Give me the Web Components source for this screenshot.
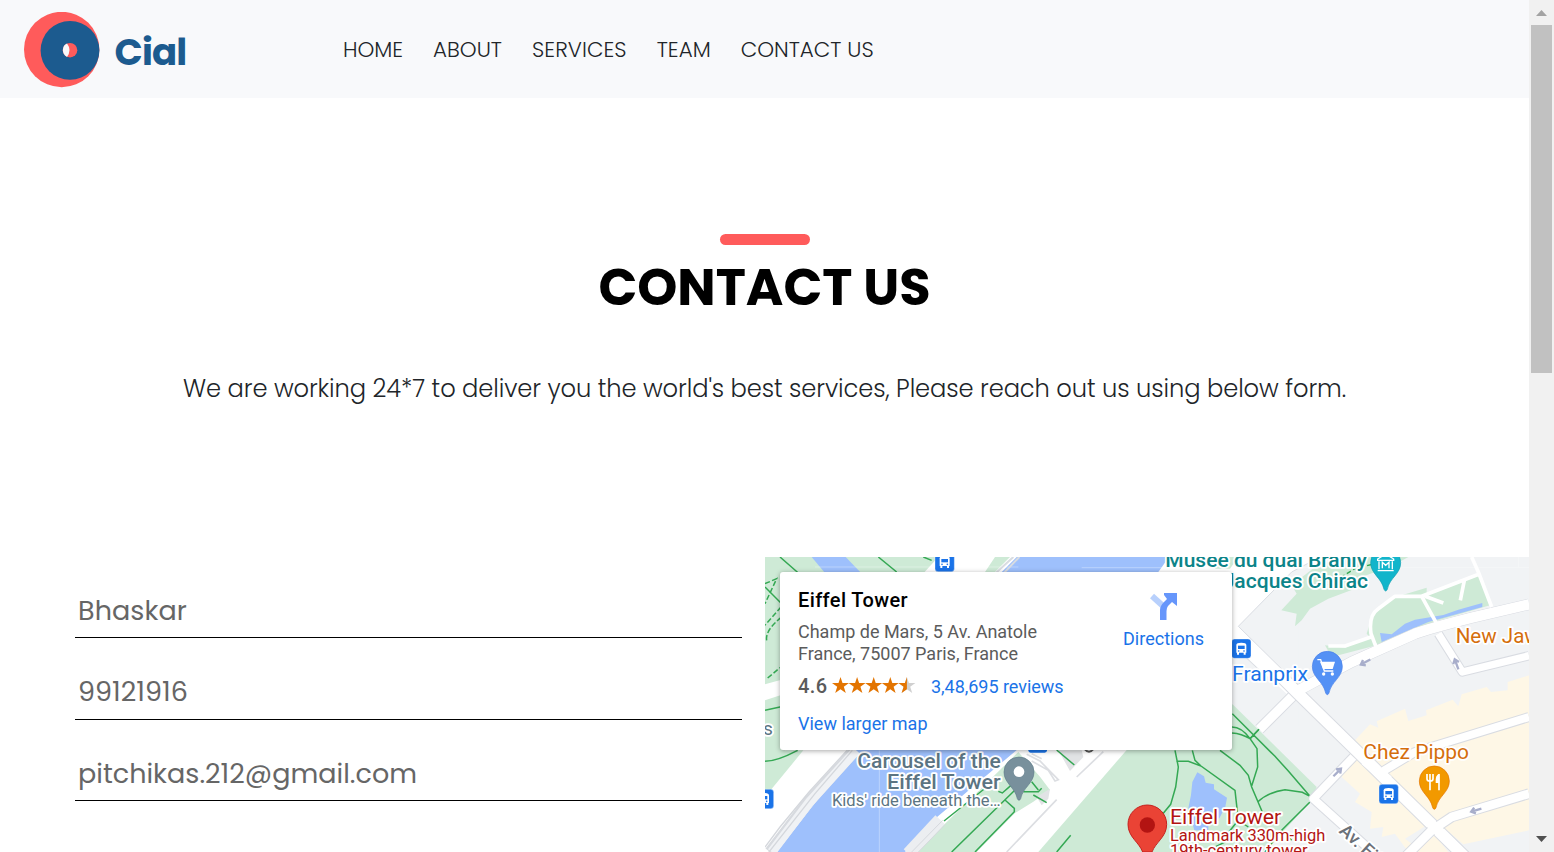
<!DOCTYPE html>
<html lang="en">
<head>
<meta charset="utf-8">
<title>Cial - Contact us</title>
<style>
html,body{margin:0;height:852px;overflow:hidden;background:#fff}
body{font-family:Poppins,Inter,sans-serif}
</style>
</head>
<body>
<cial-page></cial-page>
<script>
// <fit-text width="n"> tracks its text so that the line is exactly n pixels wide.
class FitText extends HTMLElement {
  connectedCallback() {
    this.attachShadow({mode:'open'}).innerHTML = `<style>:host{display:block;white-space:nowrap;flex:none}span{display:inline-block}</style><span><slot></slot></span>`;
    const target = +this.getAttribute('width'), s = this.shadowRoot.querySelector('span');
    if (!target) return;
    this.style.width = target + 'px';
    const w = s.getBoundingClientRect().width;
    s.style.letterSpacing = ((target - w) / this.textContent.length) + 'px';
  }
}
class CialLogo extends HTMLElement {
  constructor() {
    super();
    this.attachShadow({mode:'open'}).innerHTML = `<style>
    :host{display:flex;align-items:center;width:162px;height:76px;gap:14.5px;flex:none;color:#1c5b8f;font-weight:700;font-size:37px;line-height:72px}
    svg{display:block;flex:none}fit-text{margin-top:4px}</style>
    <svg width="76" height="76" viewBox="0 0 76 76"><circle cx="37.7" cy="37.5" r="37.7" fill="#ff5b5b"/><circle cx="46" cy="38.4" r="29.4" fill="#1c5b8f"/><circle cx="46" cy="38.2" r="7.3" fill="#ff5b5b"/><path d="M43 31.5C38 33 37 42 43 45Q48 38 43 31.5Z" fill="#f8f9fb"/></svg>
    <fit-text width="72">Cial</fit-text>`;
  }
}
class CialHeader extends HTMLElement {
  constructor() {
    super();
    this.attachShadow({mode:'open'}).innerHTML = `<style>
    :host{display:flex;align-items:center;height:98px;background:#f8f9fb;padding:2px 0 0 24px;box-sizing:border-box}
    nav{display:flex;gap:30px;margin-left:157px;font-size:21.4px;font-weight:300;line-height:30px;color:#212529}</style>
    <cial-logo></cial-logo>
    <nav><fit-text width="60">HOME</fit-text><fit-text width="69">ABOUT</fit-text><fit-text width="94.7">SERVICES</fit-text><fit-text width="54">TEAM</fit-text><fit-text width="133">CONTACT US</fit-text></nav>`;
  }
}
class ContactHero extends HTMLElement {
  constructor() {
    super();
    this.attachShadow({mode:'open'}).innerHTML = `<style>
    :host{display:flex;flex-direction:column;align-items:center;height:459px;padding-top:136px;box-sizing:border-box}
    i{width:90px;height:11px;border-radius:6px;background:#ff5b5b}
    h1{margin:12px 0 0;font-size:51px;line-height:60px;font-weight:700;color:#000}
    p{margin:55px 0 0;font-size:24.2px;line-height:34px;font-weight:300;color:#212529}</style>
    <i></i><h1><fit-text>CONTACT US</fit-text></h1>
    <p><fit-text width="1163">We are working 24*7 to deliver you the world's best services, Please reach out us using below form.</fit-text></p>`;
  }
}
class FormField extends HTMLElement {
  constructor() {
    super();
    this.attachShadow({mode:'open'}).innerHTML = `<style>
    :host{display:flex;align-items:flex-end;height:81.5px;box-sizing:border-box;border-bottom:1px solid #000;padding:0 3px 8.4px;font-size:27px;line-height:36px;color:#666}</style><slot></slot>`;
  }
}
class ContactForm extends HTMLElement {
  constructor() {
    super();
    this.attachShadow({mode:'open'}).innerHTML = `<style>
    :host{display:block;width:667px;margin:-0.4px 23px 0 75px;flex:none}</style>
    <form-field><fit-text width="109">Bhaskar</fit-text></form-field>
    <form-field><fit-text width="110">99121916</fit-text></form-field>
    <form-field><fit-text width="339">pitchikas.212@gmail.com</fit-text></form-field>`;
  }
}
const starPath = 'M8.5 0L10.5 5.9H17L11.8 9.7 13.8 16 8.5 12.2 3.2 16 5.2 9.7 0 5.9H6.5Z';
class PlaceCard extends HTMLElement {
  constructor() {
    super();
    const stars = [0,1,2,3].map(i => `<path transform="translate(${i*16.6})" d="${starPath}"/>`).join('');
    this.attachShadow({mode:'open'}).innerHTML = `<style>
    :host{display:flex;justify-content:space-between;width:452px;height:178px;box-sizing:border-box;padding:17px 28px 0 18px;background:#fff;border-radius:3px;box-shadow:0 1px 5px rgba(0,0,0,.35);font-family:Roboto,sans-serif;font-size:18px;line-height:22px;color:#5b5b5b}
    b{display:block;font-size:20px;font-weight:500;color:#000;margin-bottom:10px}
    .rate{display:flex;align-items:center;margin:11px 0 15px}
    .rate b{margin:-2px 0 0;color:#5b5b5b}
    .rate svg{margin:-4px 15px 0 4.5px}
    .blue{color:#1a73e8}
    aside{display:flex;flex-direction:column;align-items:center}
    aside svg{margin:4px 0 8px}</style>
    <div><b><fit-text width="110">Eiffel Tower</fit-text></b>
    <fit-text width="239">Champ de Mars, 5 Av. Anatole</fit-text><fit-text width="220">France, 75007 Paris, France</fit-text>
    <div class="rate"><b><fit-text width="29.5">4.6</fit-text></b>
    <svg width="84" height="16" viewBox="0 0 84 16" fill="#e37400">${stars}<g transform="translate(66.4)"><path d="${starPath}" fill="#d0d0d0"/><path d="M8.5 0V12.2L3.2 16 5.2 9.7 0 5.9H6.5Z"/></g></svg>
    <fit-text class="blue" width="132.5">3,48,695 reviews</fit-text></div>
    <fit-text class="blue" width="129.5">View larger map</fit-text></div>
    <aside><svg width="28" height="27" viewBox="0 0 28 27"><path d="M2 3L13 13" stroke="#b8d0fc" stroke-width="6"/><path d="M10 27V17Q10 13 14 9L17 6 14 2V0H27V13L22 9 18 13Q16.5 15 16.5 18V27Z" fill="#6696fb"/></svg><fit-text class="blue" width="81">Directions</fit-text></aside>`;
  }
}
const bus = (x,y) => `<g transform="translate(${x} ${y})"><rect width="58" height="58" rx="9" fill="#1a73e8" stroke="#fff" stroke-opacity=".5" stroke-width="2"/><path d="M14 18Q14 11 29 11T44 18V41H14Z" fill="#fff"/><rect x="19" y="20" width="20" height="10" fill="#1a73e8"/><path d="M16 39V47H22V39M36 39V47H42V39" fill="#fff"/><circle cx="21" cy="36" r="2.5" fill="#1a73e8"/><circle cx="37" cy="36" r="2.5" fill="#1a73e8"/></g>`;
const pin = (x,y,c,e) => `<path transform="translate(${x} ${y})" d="M-45 0A45 45 0 0 1 45 0C45 34 12 45 5 80Q0 90 -5 80C-12 45 -45 34 -45 0Z" fill="${c}" stroke="${e}" stroke-width="2"/>`;
const arrow = (x,y,r) => `<path transform="translate(${x} ${y}) rotate(${r})" d="M18 0H-8M-2 -9L-14 0L-2 9" fill="none" stroke="#a8aecb" stroke-width="7"/>`;
const label = (x,y,w,s,c,t,wt=400) => `<text x="${x-2}" y="${y}" textLength="${w+3}" lengthAdjust="spacingAndGlyphs" font-size="${s}" font-weight="${wt}" fill="${c}">${t}</text>`;
const road = (d,w) => `<path d="${d}" stroke="#d9dce2" stroke-width="${w+6}"/><path d="${d}" stroke="#fff" stroke-width="${w}"/>`;
class CityMap extends HTMLElement {
  constructor() {
    super();
    // Map units are thirds of a CSS pixel.
    this.attachShadow({mode:'open'}).innerHTML = `<style>
    :host{display:block;position:relative;width:764px;height:295px;overflow:hidden;flex:none}
    svg{display:block}place-card{position:absolute;left:15px;top:15px}</style>
    <svg width="764" height="295" viewBox="0 0 2292 885" font-family="Roboto, sans-serif">
    <rect width="2292" height="885" fill="#f1f3f5"/>
    <path d="M0 0H1400V885H0Z" fill="#fff"/>
    <g fill="#ceead6">
      <path d="M0 0H520L465 60H60V365L0 382Z"/><path d="M0 430L60 410V580H115L0 720Z"/>
      <path d="M690 0H735L690 45H660Z"/><path d="M540 800L760 585 825 659 855 699 805 734 750 768 635 885H455Z"/>
      <path d="M1085 579L1401 440L1655 690 1635 735 1545 835 1490 885H820Z"/>
    </g>
    <g fill="#9ec0fc">
      <path d="M140 0H242L300 60H190Z"/><path d="M755 0H1212L1180 45H710Z"/>
      <path d="M275 575H760L510 785 420 885H35L160 725Z"/>
      <path d="M1297 646L1317 658 1322 677 1347 682V697L1386 722 1381 749 1363 784 1330 795V820H1288L1270 754 1278 714 1282 675Z"/>
    </g>
    <g fill="none">
      <path d="M270 580L130 735 15 885" stroke="#d7dadf" stroke-width="34"/><path d="M274 580L134 735 20 885" stroke="#f0f2f5" stroke-width="28"/><path d="M246 580L132 705 45 810 0 870M262 580L150 710 0 900" stroke="#d4d7dc" stroke-width="4"/>
      <path d="M525 788L430 890" stroke="#eceef1" stroke-width="38"/><path d="M541 802L460 885M533 790L440 885" stroke="#d6d9de" stroke-width="3"/>
      <path d="M343 580V885M150 30H760M950 32H2292M2260 0V30" stroke="#fff" stroke-opacity=".3" stroke-width="3"/>
      <path d="M745 0L690 50M763 0L715 50" stroke="#d8dce1" stroke-width="6"/>
      <path d="M785 592L825 612 862 650 880 668 870 672 850 640 800 612M725 885L875 728M935 660L1015 584M800 590L830 605" stroke="#dcdee2" stroke-width="5"/>
      <path d="M880 580H950L955 600 915 642ZM855 695L815 720 830 745 850 725Z" fill="#e1e3e5"/>
      <g stroke="#34a853" stroke-width="4.5">
        <path d="M45 0L100 48M340 0L395 45M475 0L500 10M0 90L50 140M0 460L55 448M0 613Q35 613 98 580M537 792L665 690M560 885L750 699M630 885L748 764V754L720 729M700 703L712 708 738 685M875 579L928 624M775 704L820 704 830 694M800 674L820 699M805 714L845 737M875 885L917 835"/>
        <path d="M0 80L35 65 0 140M48 150L0 205M5 250Q0 220 50 180M8 363L45 332" stroke-dasharray="16 7"/>
        <path d="M1230 580L1240 630 1232 690 1217 742 1190 775M1282 580L1290 610 1308 627 1410 700 1420 790 1375 845M1234 613H1270L1308 627M1365 580L1425 625 1450 655 1460 690 1492 765M1402 470L1530 598 1568 640 1635 718M1401 510Q1430 510 1455 545M1401 528Q1430 530 1455 545L1476 575 1478 630 1460 687M1455 545L1482 517M1478 735Q1510 705 1560 698L1612 706 1635 718M1635 735L1550 820 1500 885M1340 875L1390 850M1550 820L1580 850M1420 790L1450 810"/>
      </g>
    </g>
    <path d="M1395 0H1600V560L1400 440Z" fill="#f1f3f5"/>
    <path d="M1395 0H1665L1580 45 1420 208 1600 385 1570 415 1395 255Z" fill="#fff"/>
    <path d="M1665 0L1580 45 1420 208 1600 385M1401 262L1475 332" fill="none" stroke="#d9dce2" stroke-width="3"/>
    <g fill="#ceead6">
      <path d="M1365 0H1420L1395 35H1350Z"/><path d="M1549 160L1595 110 1580 85 1650 30 1730 0H1930L1885 25 1790 60 1770 95 1690 125 1635 155 1610 190 1590 208 1595 170Z"/>
      <path d="M1805 230L1820 180 1875 125 1985 92V115L2140 50 2175 145 2020 190 1840 265Z"/><path d="M1680 265L1740 272 1818 238 1835 265 1700 300Z"/>
    </g>
    <path d="M1845 228L1880 232 1920 200 1950 188 2035 174 2080 158 2152 138V150L1990 195 1850 255Z" fill="#9ec0fc"/>
    <path d="M1670 95L1770 35 1830 20" fill="none" stroke="#34a853" stroke-width="4" stroke-dasharray="14 8"/>
    <path d="M1770 550L1815 502 1840 512 1835 493 1920 455 1930 492 1985 475 1983 460 2063 428 2080 448 2090 412 2165 390 2178 405 2228 400V375L2292 355V820L2095 862 2010 790 1920 845 1940 860 1930 885 1890 830 1850 840 1855 810 1815 815 1820 765 1770 735 1785 710 1730 660Z" fill="#fef7e6"/>
    <path d="M2010 835L1950 885H2050Z" fill="#fef7e6"/>
    <g fill="none" stroke-linejoin="round">
      ${road('M2292 142L2120 182Q1990 215 1950 230L1760 315 1600 400 1483 517',28)}
      ${road('M1550 360L1600 410 2100 900',34)}
      ${road('M2020 230L2092 345 2292 296',22)}
      ${road('M1850 645L1950 585 2292 480',24)}
      ${road('M1765 600L1645 725 1850 910',24)}
      ${road('M2292 710L2060 780 2000 820 1920 900',26)}
      <path d="M1500 312L1600 410 2100 900M2292 142L2120 182Q1990 215 1950 230L1760 315 1600 400M1800 610L1870 670" stroke="#fff" stroke-width="31"/>
      <path d="M1835 275L1818 230Q1810 175 1840 155L1890 118H1970L2145 50M1970 118L2015 200M1980 118L2035 138M2098 70L2086 130M2120 0L2140 45 2180 150M1690 267H1740L1818 240" stroke="#fff" stroke-width="11"/>
      <path d="M1455 545L1482 517" stroke="#34a853" stroke-width="4.5"/>
    </g>
    ${arrow(1800,316,-28)}${arrow(2074,320,70)}${arrow(1718,645,135)}${arrow(2132,760,-17)}
    ${bus(510,-14)}${bus(1400,246)}${bus(1842,682)}${bus(-32,697)}
    <rect x="790" y="550" width="56" height="37" rx="7" fill="#1a73e8"/><path d="M960 577Q972 592 984 577" stroke="#555" stroke-width="6" fill="none"/>
    ${pin(762,645,'#78909c','#607d8b')}<circle cx="762" cy="644" r="16" fill="#fff"/>
    ${pin(1862,17,'#12b5cb','#129eaf')}<path d="M1838 6L1862 -9 1886 6V10H1838ZM1842 13V37M1882 13V37M1838 41H1886M1852 34V16L1862 25 1872 16V34" fill="none" stroke="#fff" stroke-width="4"/>
    ${pin(1687,328,'#5491f5','#4a80e8')}<g fill="#fff"><path d="M1665 314H1710L1703 336H1674Z"/><path d="M1657 308H1667L1678 342H1705" fill="none" stroke="#fff" stroke-width="4"/><circle cx="1676" cy="351" r="5"/><circle cx="1702" cy="351" r="5"/></g>
    ${pin(2008,672,'#f29900','#e37400')}<path d="M1986 651V665Q1986 672 1995 672T2004 665V651M1995 651V700M2022 651V700" fill="none" stroke="#fff" stroke-width="5"/><path d="M2023 650Q2010 653 2012 678H2023Z" fill="#fff"/>
    <path d="M1147 744A58 58 0 0 1 1205 802C1205 840 1172 855 1161 885H1133C1122 855 1089 840 1089 802A58 58 0 0 1 1147 744Z" fill="#ea4335" stroke="#c5221f" stroke-width="3"/><circle cx="1147" cy="804" r="23" fill="#b31412"/>
    <g stroke="#fff" stroke-width="11" stroke-linejoin="round" paint-order="stroke">
    ${label(279,632,427,62,'#5b7482','Carousel of the',500)}${label(368,695,338,62,'#5b7482','Eiffel Tower',500)}${label(203,747,503,47,'#5b7482',"Kids' ride beneath the…")}
    ${label(1203,30,602,62,'#0c8489','Musée du quai Branly',500)}${label(1375,93,433,62,'#0c8489','Jacques Chirac',500)}
    ${label(1403,371,225,62,'#1a73e8','Franprix')}${label(2074,258,318,62,'#d56e0c','New Jawad')}${label(1797,606,314,62,'#d56e0c','Chez Pippo')}
    ${label(1217,800,331,62,'#b31412','Eiffel Tower')}${label(1217,852,463,47,'#b31412','Landmark 330m-high')}${label(1217,897,410,47,'#b31412','19th-century tower')}
    <text x="-5" y="535" font-size="56" fill="#5b7482">s</text><text transform="translate(1720 825) rotate(42)" font-size="54" font-weight="500" fill="#6b7078">Av. Eiffel</text>
    </g></svg><place-card></place-card>`;
  }
}
class PageScrollbar extends HTMLElement {
  constructor() {
    super();
    this.attachShadow({mode:'open'}).innerHTML = `<style>
    :host{display:flex;flex-direction:column;justify-content:space-between;width:25px;height:852px;background:#f1f1f1}
    svg{display:block}i{display:block;width:21px;height:348px;margin:0 2px;background:#c1c1c1}</style>
    <div><svg width="25" height="25"><path d="M7 16H18L12.5 10Z" fill="#a3a3a3"/></svg><i></i></div>
    <svg width="25" height="25"><path d="M7 9H18L12.5 15Z" fill="#505050"/></svg>`;
  }
}
class CialPage extends HTMLElement {
  constructor() {
    super();
    this.attachShadow({mode:'open'}).innerHTML = `<style>
    :host{display:grid;grid-template-columns:1529px 25px;height:852px;overflow:hidden}
    section{display:flex}</style>
    <main><cial-header></cial-header><contact-hero></contact-hero><section><contact-form></contact-form><city-map></city-map></section></main>
    <page-scrollbar></page-scrollbar>`;
  }
}
customElements.define('fit-text', FitText);
customElements.define('cial-logo', CialLogo);
customElements.define('cial-header', CialHeader);
customElements.define('contact-hero', ContactHero);
customElements.define('form-field', FormField);
customElements.define('contact-form', ContactForm);
customElements.define('place-card', PlaceCard);
customElements.define('city-map', CityMap);
customElements.define('page-scrollbar', PageScrollbar);
customElements.define('cial-page', CialPage);
</script>
</body>
</html>
